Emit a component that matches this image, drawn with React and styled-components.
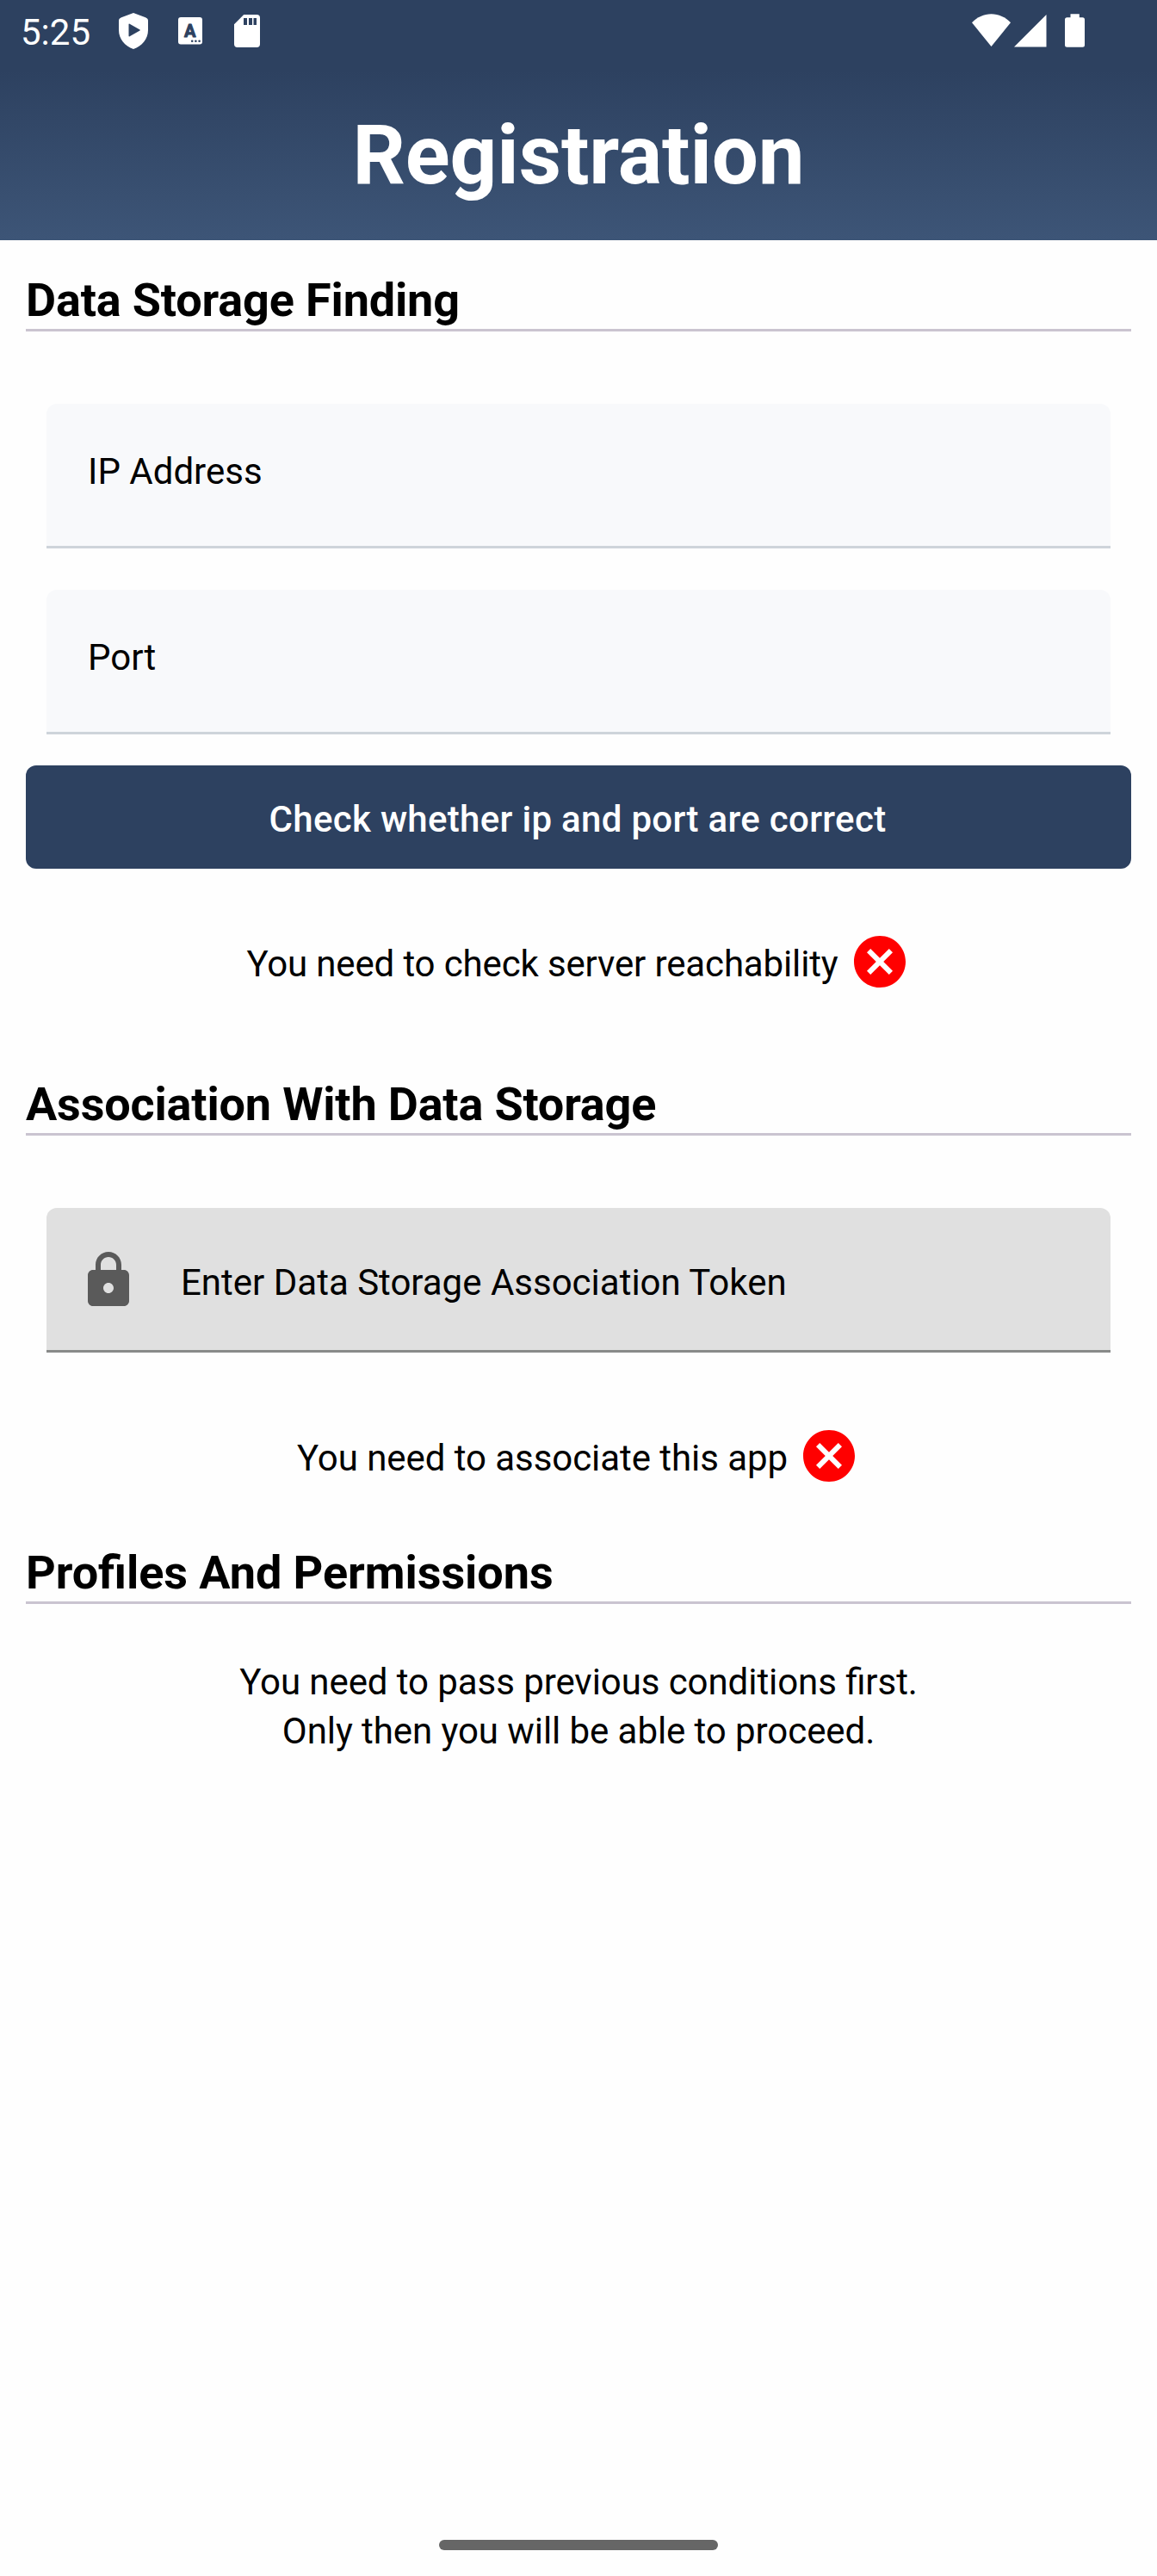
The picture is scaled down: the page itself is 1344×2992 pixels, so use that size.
import React from "react";
import styled, { createGlobalStyle } from "styled-components";

const GlobalStyle = createGlobalStyle`
  body {
    margin: 0;
    background: #fefefe;
  }
`;

const Screen = styled.div`
  display: flex;
  flex-direction: column;
  width: 1344px;
  height: 2992px;
  box-sizing: border-box;
  background: #fefefe;
  color: #000;
  font-family: Roboto, "Liberation Sans", sans-serif;
  font-size: 42px;
  font-feature-settings: "liga" 1;
`;

const Header = styled.header`
  height: 279px;
  flex: none;
  background: linear-gradient(#2d4160 0, #2d4160 81px, #3d5577 279px);
  color: #fff;
`;

const StatusBar = styled.div`
  display: flex;
  justify-content: space-between;
  align-items: flex-start;
  height: 81px;
  padding: 0 84px 0 24px;
  box-sizing: border-box;
`;

const Clock = styled.span`
  width: 114px;
  line-height: 76px;
  font-size: 42px;
`;

const IconGroup = styled.div`
  display: flex;
  align-items: flex-start;
`;

const StatusIcon = styled.svg`
  display: block;
  flex: none;
  margin: ${(p) => p.$top}px 0 0 ${(p) => p.$gap || 0}px;
  fill: currentColor;
`;

const Title = styled.h1`
  margin: 0;
  text-align: center;
  font-size: 96px;
  font-weight: 700;
  line-height: 198px;
  letter-spacing: -0.1px;
`;

const Main = styled.main`
  display: flex;
  flex-direction: column;
  flex: 1;
  padding: 37px 30px 0;
`;

const SectionTitle = styled.h2`
  margin: ${(p) => p.$top || 0}px 0 0;
  border-bottom: 3px solid #cac4d0;
  font-size: 54px;
  font-weight: 700;
  line-height: 66px;
  letter-spacing: ${(p) => p.$tracking || 0}px;
`;

const Fields = styled.div`
  display: flex;
  flex-direction: column;
  gap: 48px;
  padding: 84px 24px 0;
`;

const Field = styled.label`
  display: flex;
  align-items: flex-start;
  height: 168px;
  box-sizing: border-box;
  padding: 0 48px 0 ${(p) => (p.$disabled ? 36 : 48)}px;
  border-radius: 12px 12px 0 0;
  background: ${(p) => (p.$disabled ? "#e0e0e0" : "#f8f9fb")};
  box-shadow: inset 0 -3px 0 ${(p) => (p.$disabled ? "#888a89" : "#ced4da")};
`;

const FieldText = styled.span`
  margin: ${(p) => (p.$withIcon ? "62px 0 0 48px" : "54px 0 0")};
  line-height: 50px;
`;

const LockIcon = styled.svg`
  display: block;
  margin-top: 48px;
  fill: #5a5a5a;
`;

const CheckButton = styled.button`
  height: 120px;
  margin: 36px 0 0;
  padding: 4px 2px 0 0;
  border: 0;
  border-radius: 12px;
  background: #2d4160;
  color: #fff;
  font: 500 42px Roboto, "Liberation Sans", sans-serif;
  letter-spacing: 0.3px;
`;

const StatusRow = styled.div`
  display: flex;
  justify-content: center;
  margin-top: ${(p) => p.$top}px;
  height: 72px;
`;

const StatusText = styled.span`
  padding-right: 12px;
  line-height: 77px;
  letter-spacing: ${(p) => p.$tracking}px;
`;

const CancelIcon = styled.svg`
  display: block;
  flex: none;
  fill: #f00;
`;

const Note = styled.p`
  margin: 62px 0 0;
  text-align: center;
  line-height: 57px;
  letter-spacing: -0.07px;
`;

const NavBar = styled.footer`
  display: flex;
  justify-content: center;
  height: 42px;
`;

const NavHandle = styled.div`
  width: 324px;
  height: 12px;
  border-radius: 6px;
  background: #666;
`;

function Requirement({ top, tracking, children }) {
  return (
    <StatusRow $top={top}>
      <StatusText $tracking={tracking}>{children}</StatusText>
      <CancelIcon width="72" height="72" viewBox="0 0 24 24">
        <path d="M12 2C6.47 2 2 6.47 2 12s4.47 10 10 10 10-4.47 10-10S17.53 2 12 2zm5 13.59L15.59 17 12 13.41 8.41 17 7 15.59 10.59 12 7 8.41 8.41 7 12 10.59 15.59 7 17 8.41 13.41 12 17 15.59z" />
      </CancelIcon>
    </StatusRow>
  );
}

export default function App() {
  return (
    <Screen>
      <GlobalStyle />
      <Header>
        <StatusBar>
          <IconGroup>
            <Clock>5:25</Clock>
            <StatusIcon $top={15} width="34" height="42" viewBox="0 0 34 42">
              <path
                fillRule="evenodd"
                d="M17 0L31 5.2Q34 6.300 34 9V20C34 30 27 38.500 17 42C7 38.500 0 30 0 20V9Q0 6.300 3 5.200ZM11.500 13.200V26.800Q11.700 27.700 12.600 27.200L24.500 20.600Q25.200 20 24.500 19.400L12.600 12.800Q11.700 12.300 11.500 13.200Z"
              />
            </StatusIcon>
            <StatusIcon $top={20} $gap={35} width="28" height="32" viewBox="0 0 28 32">
              <rect width="28" height="31.500" rx="3" />
              <text
                x="13.800"
                y="22.800"
                textAnchor="middle"
                fontSize="20"
                fontWeight="700"
                fill="#2d4160"
                stroke="#2d4160"
                strokeWidth="1"
                strokeLinejoin="round"
              >
                A
              </text>
              <g fill="#2d4160">
                <circle cx="16.200" cy="27.800" r="1.300" />
                <circle cx="20.400" cy="27.800" r="1.300" />
                <circle cx="24.600" cy="27.800" r="1.300" />
              </g>
            </StatusIcon>
            <StatusIcon $top={17} $gap={37} width="30" height="38" viewBox="0 0 30 38">
              <path
                fillRule="evenodd"
                d="M11.200 0H26.300Q30 0 30 3.700V34.300Q30 38 26.300 38H3.700Q0 38 0 34.300V11.200ZM11 4V12H15V4ZM17 4V12H21V4ZM22.500 4V12H26V4Z"
              />
            </StatusIcon>
          </IconGroup>
          <IconGroup>
            <StatusIcon $top={16} width="45" height="38" viewBox="0 0 45 38">
              <path d="M22.500 38L0 10.300C6 4 14 0.300 22.500 0.300S39 4 45 10.300Z" />
            </StatusIcon>
            <StatusIcon $top={17} $gap={4} width="38" height="38" viewBox="0 0 38 38">
              <path d="M0 37.500L37.500 0V37.500Z" />
            </StatusIcon>
            <StatusIcon $top={16} $gap={21} width="23" height="39" viewBox="0 0 23 39">
              <path d="M6.500 0.200H16.800V4.200H20.500Q23 4.200 23 6.700V36.300Q23 38.800 20.500 38.800H2.500Q0 38.800 0 36.300V6.700Q0 4.200 2.500 4.200H6.500Z" />
            </StatusIcon>
          </IconGroup>
        </StatusBar>
        <Title>Registration</Title>
      </Header>

      <Main>
        <SectionTitle $tracking={-0.16}>Data Storage Finding</SectionTitle>
        <Fields>
          <Field>
            <FieldText>IP Address</FieldText>
          </Field>
          <Field>
            <FieldText>Port</FieldText>
          </Field>
        </Fields>
        <CheckButton>Check whether ip and port are correct</CheckButton>
        <Requirement top={72} tracking={-0.14}>
          You need to check server reachability
        </Requirement>

        <SectionTitle $top={97} $tracking={-0.18}>
          Association With Data Storage
        </SectionTitle>
        <Fields>
          <Field $disabled>
            <LockIcon width="72" height="72" viewBox="0 0 24 24">
              <path d="M18 8h-1V6c0-2.760-2.240-5-5-5S7 3.240 7 6v2H6c-1.100 0-2 .9-2 2v10c0 1.100.9 2 2 2h12c1.100 0 2-.9 2-2V10c0-1.100-.9-2-2-2zm-6 9c-1.100 0-2-.9-2-2s.9-2 2-2 2 .9 2 2-.9 2-2 2zM9 8V6c0-1.660 1.340-3 3-3s3 1.340 3 3v2H9z" />
            </LockIcon>
            <FieldText $withIcon>Enter Data Storage Association Token</FieldText>
          </Field>
        </Fields>
        <Requirement top={84} tracking={-0.06}>
          You need to associate this app
        </Requirement>

        <SectionTitle $top={67} $tracking={-0.06}>
          Profiles And Permissions
        </SectionTitle>
        <Note>
          You need to pass previous conditions first.
          <br />
          Only then you will be able to proceed.
        </Note>
      </Main>

      <NavBar>
        <NavHandle />
      </NavBar>
    </Screen>
  );
}
